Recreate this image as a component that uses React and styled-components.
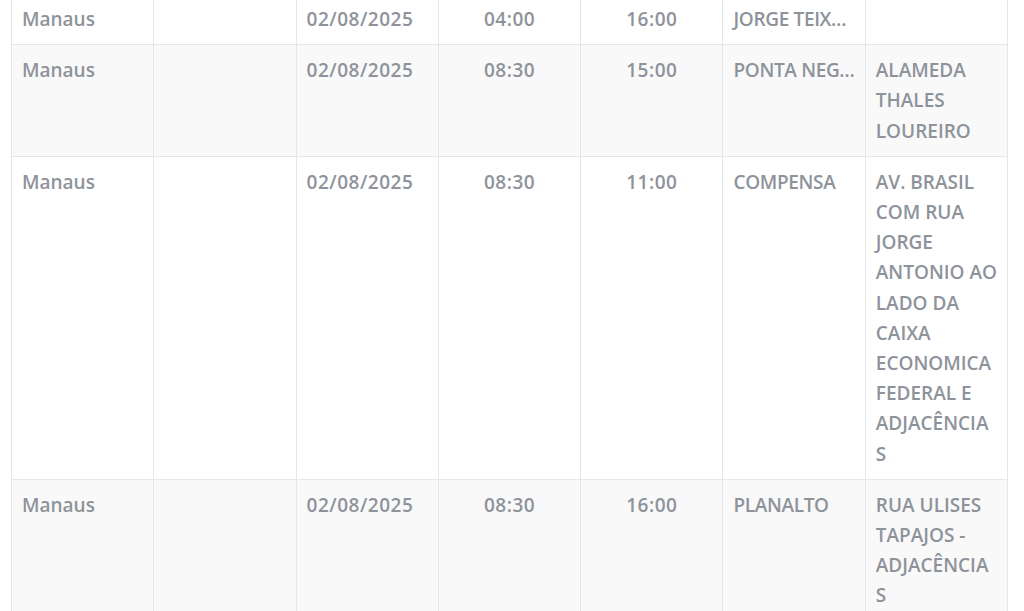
import React from 'react'
import styled, { createGlobalStyle } from 'styled-components'

const GlobalStyle = createGlobalStyle`
  html, body {
    margin: 0;
    padding: 0;
    background: #ffffff;
  }
  body {
    font-family: "Open Sans", "Liberation Sans", sans-serif;
  }
`

const rows = [
  { city: 'Manaus', date: '02/08/2025', start: '04:00', end: '16:00', area: 'JORGE TEIXEIRA', address: '' },
  { city: 'Manaus', date: '02/08/2025', start: '08:30', end: '15:00', area: 'PONTA NEGRA', address: 'ALAMEDA THALES LOUREIRO' },
  {
    city: 'Manaus',
    date: '02/08/2025',
    start: '08:30',
    end: '11:00',
    area: 'COMPENSA',
    address: 'AV. BRASIL COM RUA JORGE ANTONIO AO LADO DA CAIXA ECONOMICA FEDERAL E ADJACÊNCIAS',
  },
  { city: 'Manaus', date: '02/08/2025', start: '08:30', end: '16:00', area: 'PLANALTO', address: 'RUA ULISES TAPAJOS - ADJACÊNCIAS' },
]

const App = () => {
  return (
    <>
      <GlobalStyle />
      <Page>
        <Table>
          <colgroup>
            {Array.from({ length: 7 }).map((_, i) => <col key={i} />)}
          </colgroup>
          <tbody>
            {rows.map((row, i) => (
              <Row key={i} $striped={i % 2 === 1}>
                <Cell>{row.city}</Cell>
                <Cell />
                <Cell $numeric>{row.date}</Cell>
                <Cell $numeric $align='center'>{row.start}</Cell>
                <Cell $numeric $align='center'>{row.end}</Cell>
                <Cell $truncate title={row.area}>{row.area}</Cell>
                <Cell>{row.address}</Cell>
              </Row>
            ))}
          </tbody>
        </Table>
      </Page>
    </>
  )
}
export default App

const Page = styled.div`
  padding: 0 17px 0 11px;
  margin-top: -7px;
`

const Table = styled.table`
  width: 996px;
  table-layout: fixed;
  border-collapse: collapse;
  col {
    width: 142.3px;
  }
`

const Row = styled.tr`
  background: ${({ $striped }) => $striped ? '#f9f9f9' : '#ffffff'};
`

const Cell = styled.td`
  border: 1px solid #e6e6e6;
  padding: 10px 10px 10px 10px;
  vertical-align: top;
  text-align: ${({ $align }) => $align || 'left'};
  color: #8e939b;
  font-size: 19px;
  font-weight: 600;
  letter-spacing: ${({ $numeric }) => $numeric ? '0.5px' : '0'};
  line-height: 30.2px;
  overflow-wrap: anywhere;
  ${({ $truncate }) => $truncate && `
    padding-right: 8.5px;
    white-space: nowrap;
    overflow: hidden;
    text-overflow: ellipsis;
    letter-spacing: -0.35px;
  `}
`
